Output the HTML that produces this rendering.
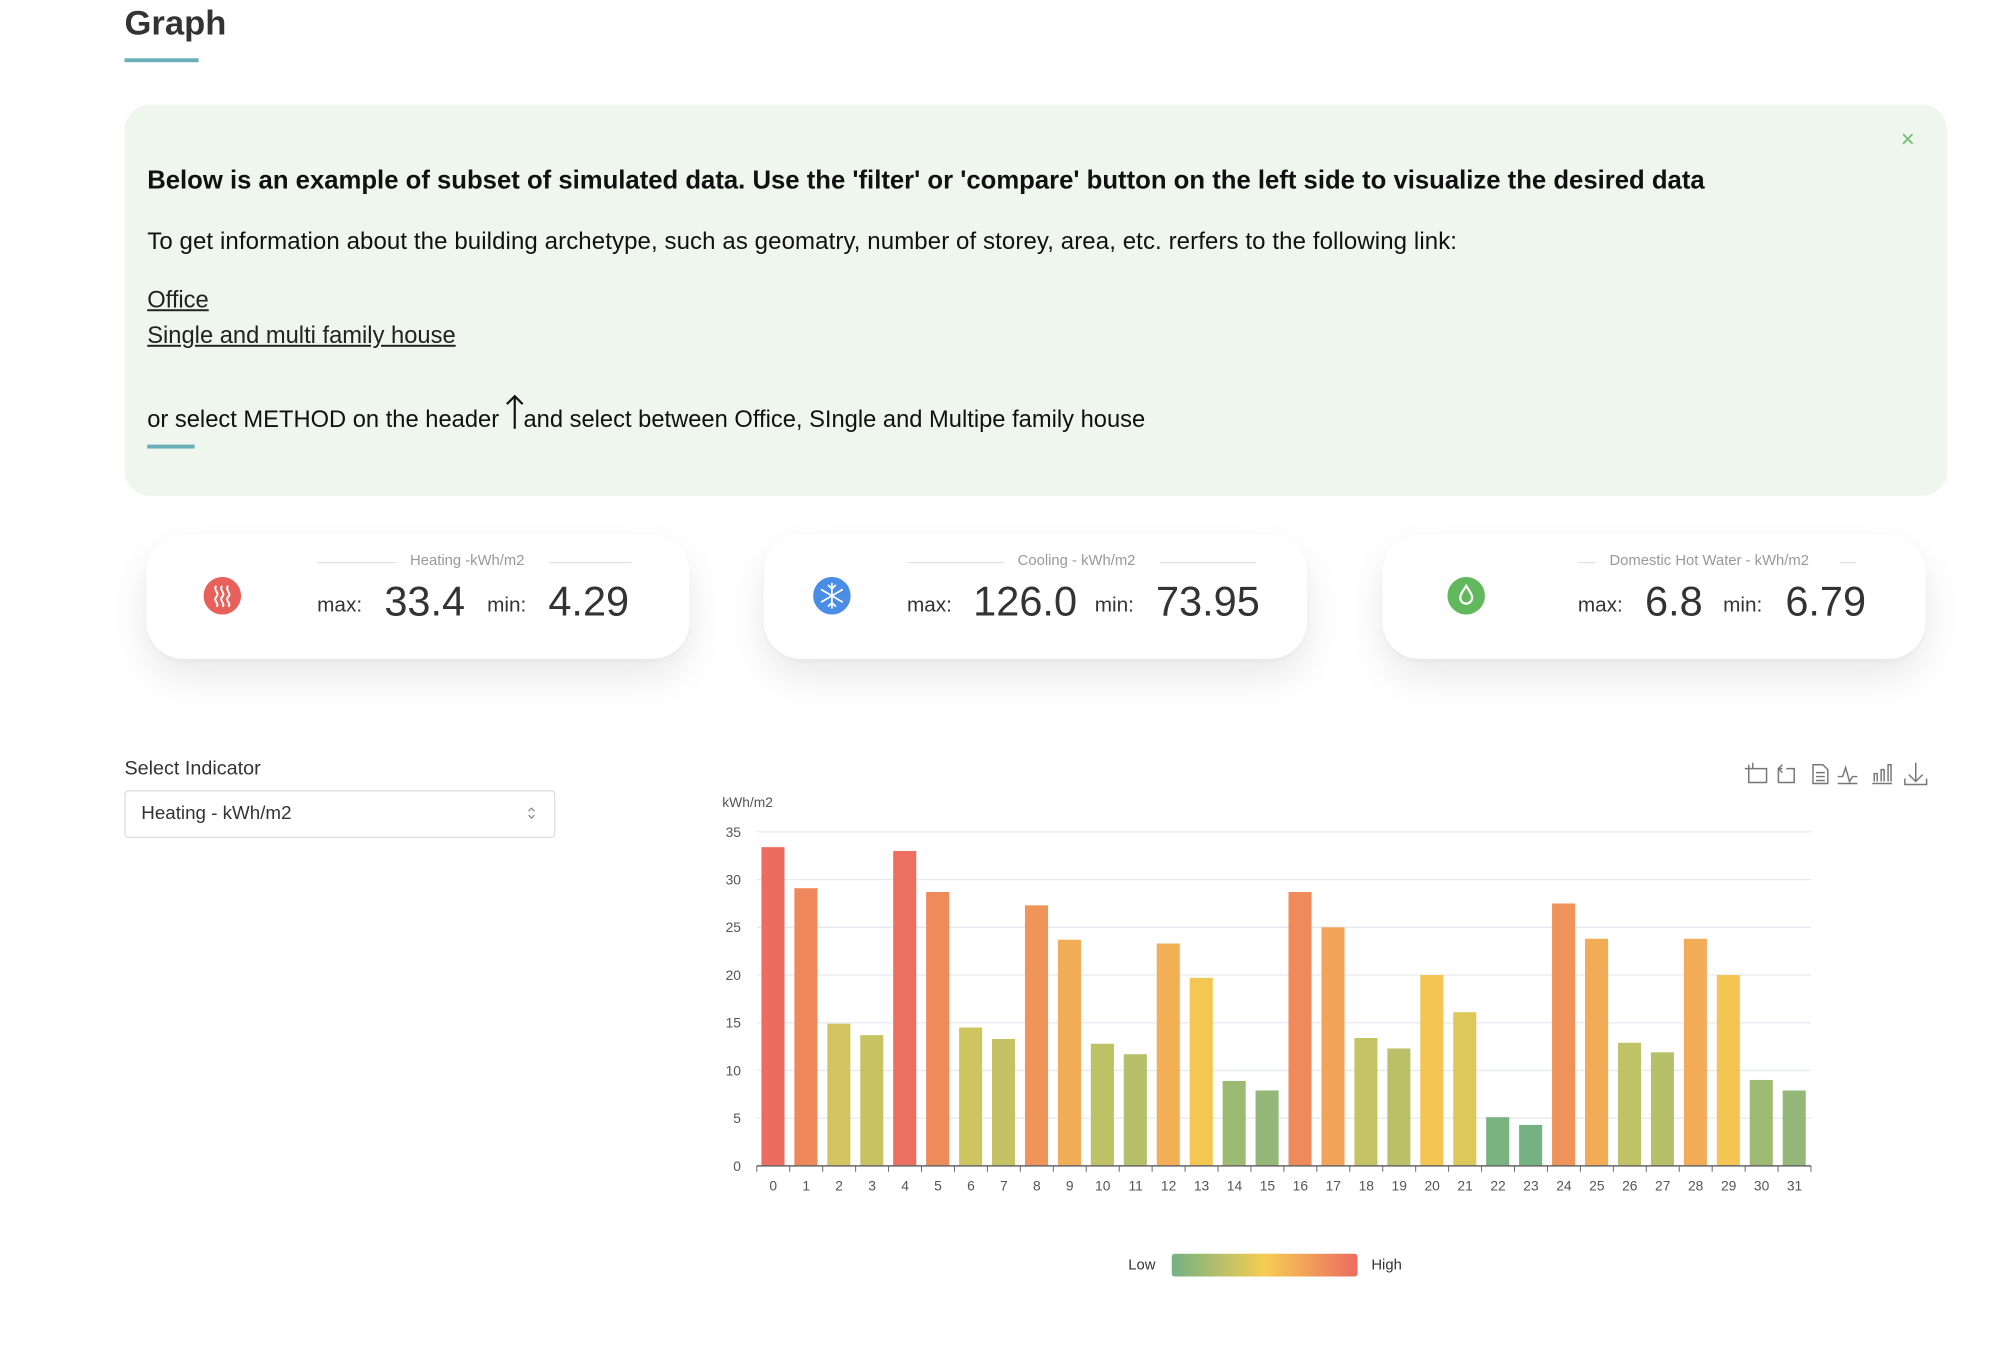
<!DOCTYPE html>
<html><head><meta charset="utf-8">
<style>
html,body{margin:0;padding:0;background:#fff;width:1996px;height:1348px;overflow:hidden;font-family:"Liberation Sans",sans-serif;color:#222}
#w{position:absolute;left:0;top:0;width:2020px;height:1365px;transform:scale(0.988);transform-origin:0 0}
.a{position:absolute;white-space:nowrap}
.card{position:absolute;top:541px;width:550px;height:126px;background:#fff;border-radius:38px;box-shadow:0 18px 40px rgba(0,0,0,0.09),0 2px 6px rgba(0,0,0,0.04)}
.ct{position:absolute;top:559px;font-size:15px;color:#999;height:18px;line-height:18px}
.ln{position:absolute;top:569px;height:1px;background:#ddd}
.lbl{position:absolute;top:601px;font-size:21px;color:#333}
.val{position:absolute;top:585px;font-size:42px;color:#333}
</style></head><body><div id="w">
<div class="a" style="left:126px;top:4px;font-size:35px;color:#333;font-weight:bold">Graph</div>
<div class="a" style="left:126px;top:59px;width:75px;height:4px;background:#6aafb8"></div>

<div class="a" style="left:126px;top:106px;width:1845px;height:396px;background:#eff6ee;border-radius:26px"></div>
<div class="a" style="left:1924px;top:128px;font-size:24px;color:#6cbf6e">×</div>
<div class="a" style="left:149px;top:167px;font-size:26px;font-weight:bold;color:#111">Below is an example of subset of simulated data. Use the 'filter' or 'compare' button on the left side to visualize the desired data</div>
<div class="a" style="left:149px;top:231px;font-size:24.3px;color:#111;letter-spacing:0.1px">To get information about the building archetype, such as geomatry, number of storey, area, etc. rerfers to the following link:</div>
<div class="a" style="left:149px;top:290px;font-size:24px;color:#222;text-decoration:underline">Office</div>
<div class="a" style="left:149px;top:326px;font-size:24px;color:#222;text-decoration:underline">Single and multi family house</div>
<div class="a" style="left:149px;top:398px;font-size:24px;color:#111">or select METHOD on the header <svg style="vertical-align:-4px;margin:0 -2px 0 -2px" width="22" height="38"><path d="M11 36V3M3 11L11 3L19 11" stroke="#111" stroke-width="2.2" fill="none"/></svg>and select between Office, SIngle and Multipe family house</div>
<div class="a" style="left:149px;top:450px;width:48px;height:4px;background:#6aafb8"></div>

<div class="card" style="left:148px"></div>
<div class="card" style="left:773px"></div>
<div class="card" style="left:1399px"></div>

<svg class="a" style="left:206px;top:584px" width="38" height="38"><circle cx="19" cy="19" r="19" fill="#e8605a"/><path d="M13 9c-4 4 4 7 0 11s4 7 0 10M19 9c-4 4 4 7 0 11s4 7 0 10M25 9c-4 4 4 7 0 11s4 7 0 10" stroke="#fff" stroke-width="2" fill="none"/></svg>
<svg class="a" style="left:823px;top:584px" width="38" height="38"><circle cx="19" cy="19" r="19" fill="#4a8de6"/><g stroke="#fff" stroke-width="1.8" fill="none"><path d="M19 6V32M8 12.5L30 25.5M8 25.5L30 12.5M15 8l4 4 4-4M15 30l4-4 4 4"/></g></svg>
<svg class="a" style="left:1465px;top:584px" width="38" height="38"><circle cx="19" cy="19" r="19" fill="#62b95d"/><path d="M19 9C16 14 13 17 13 21a6 6 0 0 0 12 0c0-4-3-7-6-12z" stroke="#fff" stroke-width="2.2" fill="none"/></svg>

<div class="ln" style="left:321px;width:80px"></div><div class="ct" style="left:415px">Heating -kWh/m2</div><div class="ln" style="left:556px;width:83px"></div>
<div class="lbl" style="left:321px">max:</div><div class="val" style="left:389px">33.4</div><div class="lbl" style="left:493px">min:</div><div class="val" style="left:555px">4.29</div>

<div class="ln" style="left:918px;width:98px"></div><div class="ct" style="left:1030px">Cooling - kWh/m2</div><div class="ln" style="left:1174px;width:97px"></div>
<div class="lbl" style="left:918px">max:</div><div class="val" style="left:985px">126.0</div><div class="lbl" style="left:1108px">min:</div><div class="val" style="left:1170px">73.95</div>

<div class="ln" style="left:1597px;width:18px"></div><div class="ct" style="left:1629px">Domestic Hot Water - kWh/m2</div><div class="ln" style="left:1862px;width:17px"></div>
<div class="lbl" style="left:1597px">max:</div><div class="val" style="left:1665px">6.8</div><div class="lbl" style="left:1744px">min:</div><div class="val" style="left:1807px">6.79</div>

<div class="a" style="left:126px;top:767px;font-size:20px;color:#333">Select Indicator</div>
<div class="a" style="left:126px;top:800px;width:434px;height:46px;border:1px solid #d4d4d4;border-radius:4px"></div>
<div class="a" style="left:143px;top:813px;font-size:19px;color:#333">Heating - kWh/m2</div>
<svg class="a" style="left:532px;top:814px" width="12" height="18"><path d="M3 7l3-3 3 3M3 11l3 3 3-3" stroke="#888" stroke-width="1.3" fill="none"/></svg>

<svg class="a" style="left:1760px;top:768px" width="210" height="30" fill="none" stroke="#777" stroke-width="1.5">
<path d="M10 6v18h18V10H14M6 10h8V4"/>
<path d="M44 10h-4v14h16V10h-8M44 6l-4 4 4 4"/>
<path d="M75 6h10l5 5v14H75zM78 14h9M78 18h9M78 22h9"/>
<path d="M100 25h20M100 18h5l3-9 4 14 3-5h5"/>
<path d="M135 25h20M137 23v-8h3v8M144 23v-12h3v12M151 23v-17h3v17"/>
<path d="M168 20v6h22v-6M179 4v19M172 16l7 7 7-7"/>
</svg>

<svg id="ch" class="a" style="left:700px;top:790px" width="1200" height="440"></svg>

<div class="a" style="left:1142px;top:1272px;font-size:15px;color:#333">Low</div>
<div class="a" style="left:1186px;top:1269px;width:188px;height:23px;border-radius:3px;background:linear-gradient(90deg,#74b183,#f5cd52,#ec6c60)"></div>
<div class="a" style="left:1388px;top:1272px;font-size:15px;color:#333">High</div>
</div>
<script>
var v=[33.4,29.1,14.9,13.7,33.0,28.7,14.5,13.3,27.3,23.7,12.8,11.7,23.3,19.7,8.9,7.9,28.7,25.0,13.4,12.3,20.0,16.1,5.1,4.29,27.5,23.8,12.9,11.9,23.8,20.0,9.0,7.9];
var ox=700,oy=790,x0=766-ox,x1=1833-ox,y0=1180-oy,y35=842-oy,s='';
function col(t){var a=[[0x74,0xb1,0x83],[0xf5,0xcd,0x52],[0xec,0x6c,0x60]],i=t<.5?0:1,u=t<.5?t*2:(t-.5)*2,c=a[i].map(function(q,k){return Math.round(q+(a[i+1][k]-q)*u)});return 'rgb('+c.join(',')+')';}
s+='<text x="31" y="27" font-size="14" fill="#555" font-family="Liberation Sans">kWh/m2</text>';
for(var k=0;k<=7;k++){var y=y0+(y35-y0)*k/7;if(k>0)s+='<line x1="'+x0+'" x2="'+x1+'" y1="'+y+'" y2="'+y+'" stroke="#e6e9f0" stroke-width="1.3"/>';s+='<text x="'+(x0-16)+'" y="'+(y+5)+'" font-size="14" fill="#555" text-anchor="end" font-family="Liberation Sans">'+(k*5)+'</text>';}
var w=(x1-x0)/32;
for(var i=0;i<32;i++){var h=(y0-y35)*v[i]/35,bx=x0+w*i+w*0.14,t=(v[i]-4.29)/(33.4-4.29);
s+='<rect x="'+bx+'" y="'+(y0-h)+'" width="'+(w*0.7)+'" height="'+h+'" fill="'+col(t)+'"/>';
s+='<text x="'+(x0+w*i+w/2)+'" y="'+(y0+25)+'" font-size="14" fill="#555" text-anchor="middle" font-family="Liberation Sans">'+i+'</text>';
s+='<line x1="'+(x0+w*i)+'" x2="'+(x0+w*i)+'" y1="'+y0+'" y2="'+(y0+6)+'" stroke="#666"/>';}
s+='<line x1="'+x1+'" x2="'+x1+'" y1="'+y0+'" y2="'+(y0+6)+'" stroke="#666"/>';
s+='<line x1="'+x0+'" x2="'+x1+'" y1="'+y0+'" y2="'+y0+'" stroke="#666" stroke-width="1.5"/>';
document.getElementById('ch').innerHTML=s;
</script>
</body></html>
